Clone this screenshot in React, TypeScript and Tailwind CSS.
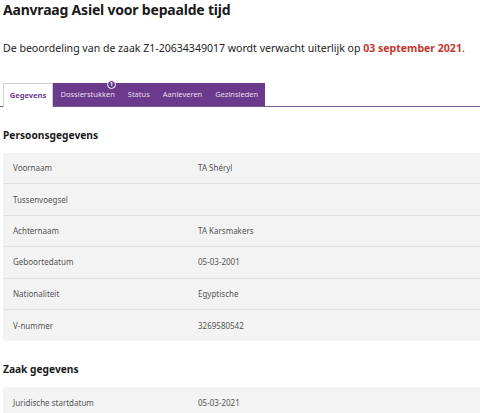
import React from 'react'

const fontStack = "font-['Noto_Sans','Open_Sans',sans-serif]"

const persoonsgegevens = [
  ['Voornaam', 'TA Shéryl'],
  ['Tussenvoegsel', ''],
  ['Achternaam', 'TA Karsmakers'],
  ['Geboortedatum', '05-03-2001'],
  ['Nationaliteit', 'Egyptische'],
  ['V-nummer', '3269580542'],
]

function Rows({ rows }: { rows: string[][] }) {
  return (
    <div className="ml-[3px] bg-[#f3f3f3]">
      {rows.map(([label, value], i) => (
        <div
          key={label}
          className={`flex h-[31.4px] items-center pl-[10px] text-[8px] text-[#555555] ${i < rows.length - 1 ? 'border-b border-[#e2e2e2]' : ''}`}
        >
          <span className="w-[185px]">{label}</span>
          <span>{value}</span>
        </div>
      ))}
    </div>
  )
}

function Tab({ label, badge }: { label: string; badge?: boolean }) {
  return (
    <div className="relative flex h-[23px] items-center px-[6.5px] text-[7.5px] text-[#e6dcec]">
      {label}
      {badge && (
        <span className="absolute left-[53px] top-[-3px] flex h-[9px] w-[9px] items-center justify-center rounded-full border border-white bg-[#6b3a8c] text-[5px] font-bold leading-none text-white">
          1
        </span>
      )}
    </div>
  )
}

export default function App() {
  return (
    <div className={`h-[413px] w-[480px] overflow-hidden bg-white ${fontStack}`}>
      <h1 className="pl-[3px] text-[14px] font-bold leading-[19px] tracking-[-0.2px] text-[#1a1a1a]">
        Aanvraag Asiel voor bepaalde tijd
      </h1>
      <p className="mt-[22px] whitespace-nowrap pl-[3px] text-[10.55px] leading-[14px] text-[#222222]">
        De beoordeling van de zaak Z1-20634349017 wordt verwacht uiterlijk op{' '}
        <span className="font-bold text-[#c4382f]">03 september 2021</span>.
      </p>
      <div className="mt-[28px] flex h-[24px] border-b border-[#7b5a98] pl-[3px]">
        <div className="mb-[-1px] flex h-[24px] w-[50px] items-center justify-center border-x border-t border-[#cfcfcf] bg-white text-[7.5px] font-bold text-[#6b3a8c]">
          Gegevens
        </div>
        <div className="flex h-[23px] bg-[#6b3a8c] pl-[1px]">
          <Tab label="Dossierstukken" badge />
          <Tab label="Status" />
          <Tab label="Aanleveren" />
          <Tab label="Gezinsleden" />
        </div>
      </div>
      <h2 className="mt-[21px] pl-[3px] text-[10.2px] font-bold leading-[14px] text-[#1a1a1a]">Persoonsgegevens</h2>
      <div className="mt-[11px]">
        <Rows rows={persoonsgegevens} />
      </div>
      <h2 className="mt-[21px] pl-[3px] text-[10.2px] font-bold leading-[14px] text-[#1a1a1a]">Zaak gegevens</h2>
      <div className="mt-[11px]">
        <Rows rows={[['Juridische startdatum', '05-03-2021']]} />
      </div>
    </div>
  )
}
